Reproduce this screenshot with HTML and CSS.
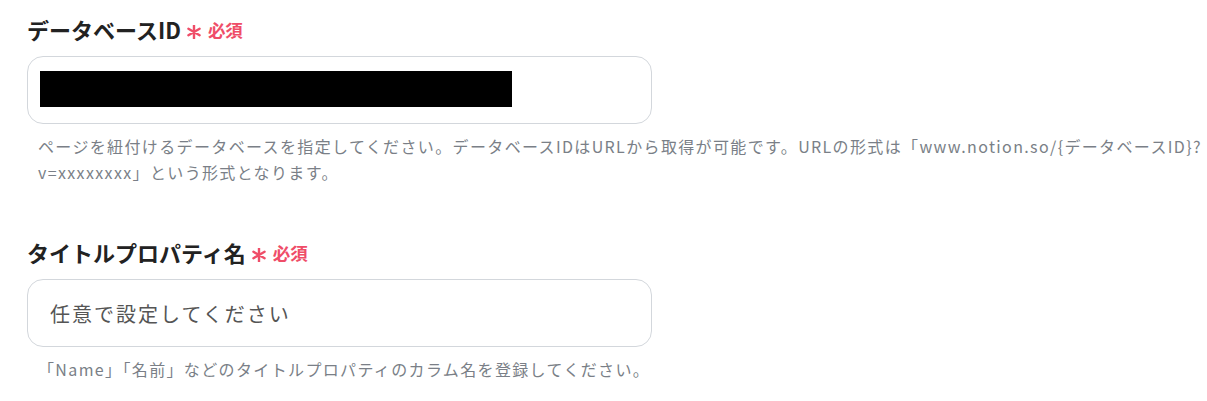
FILE: index.html
```html
<!DOCTYPE html>
<html lang="ja">
<head>
    <meta charset="UTF-8">
    <meta name="viewport" content="width=device-width, initial-scale=1.0">
    <title>Notion設定</title>
    <link rel="stylesheet" href="styles.css">
</head>
<body>
    <div class="settings">
        <div class="field">
            <label class="field-label">データベースID
                <svg class="req-mark" viewBox="0 0 14 14" width="14" height="14"><path d="M7 0.5V13.5M1.4 3.75L12.6 10.25M1.4 10.25L12.6 3.75"/></svg>
                <span class="req-text">必須</span>
            </label>
            <div class="field-input">
                <span class="redacted"></span>
            </div>
            <p class="field-help">ページを紐付けるデータベースを指定してください。データベースIDはURLから取得が可能です。URLの形式は「www.notion.so/{データベースID}?v=xxxxxxxx」という形式となります。</p>
        </div>

        <div class="field">
            <label class="field-label" for="titleProp">タイトルプロパティ名
                <svg class="req-mark" viewBox="0 0 14 14" width="14" height="14"><path d="M7 0.5V13.5M1.4 3.75L12.6 10.25M1.4 10.25L12.6 3.75"/></svg>
                <span class="req-text">必須</span>
            </label>
            <input class="field-input" type="text" id="titleProp" placeholder="任意で設定してください">
            <p class="field-help">「Name」「名前」などのタイトルプロパティのカラム名を登録してください。</p>
        </div>
    </div>
</body>
</html>
```

FILE: styles.css
```css
body {
    margin: 0;
    background: #ffffff;
    font-family: 'Noto Sans CJK JP', 'Noto Sans', sans-serif;
    color: #222222;
}

.settings {
    padding: 15px 4px 0 27px;
}

.field {
    margin-bottom: 53px;
}

.field:last-child {
    margin-bottom: 0;
}

.field-label {
    display: flex;
    align-items: center;
    height: 28px;
    font-size: 22px;
    font-weight: bold;
    color: #222222;
}

.req-mark {
    flex: none;
    margin-left: 6px;
    margin-top: 6px;
    fill: none;
    stroke: #ef4d68;
    stroke-width: 2.4;
    stroke-linecap: round;
}

.req-text {
    color: #ef4d68;
    font-size: 17.5px;
    font-weight: bold;
    margin-left: 7px;
}

.field-input {
    display: block;
    box-sizing: border-box;
    width: 625px;
    height: 68px;
    margin-top: 13px;
    border: 1px solid #d3d7dc;
    border-radius: 16px;
    background: #ffffff;
    padding: 0 22px;
    font-family: inherit;
    font-size: 20px;
    letter-spacing: 0.1em;
    color: #333333;
    outline: none;
}

.field-input::placeholder {
    color: #555555;
}

div.field-input {
    padding: 14px 12px;
}

.redacted {
    display: block;
    width: 472px;
    height: 36px;
    background: #000000;
}

.field-help {
    margin: 9px 0 0;
    padding-left: 11px;
    font-size: 16px;
    line-height: 26px;
    letter-spacing: 0.085em;
    color: #7a7f87;
}
```
